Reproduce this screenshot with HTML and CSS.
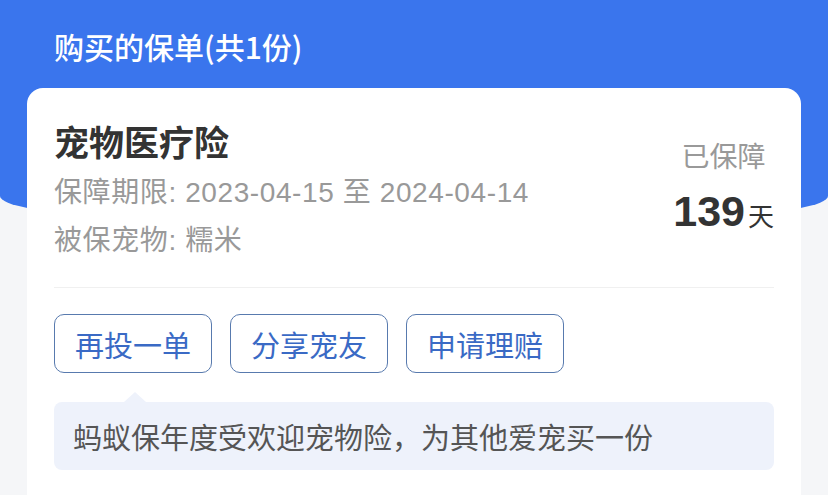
FILE: index.html
```html
<!DOCTYPE html>
<html lang="zh-CN">
<head>
    <meta charset="UTF-8">
    <meta name="viewport" content="width=device-width, initial-scale=1.0">
    <title>购买的保单</title>
    <link rel="stylesheet" href="styles.css">
</head>
<body>
    <div class="page">
        <header class="banner">
            <h1>购买的保单(共1份)</h1>
        </header>

        <section class="card">
            <div class="card-top">
                <div class="info">
                    <h2>宠物医疗险</h2>
                    <p>保障期限: 2023-04-15 至 2024-04-14</p>
                    <p>被保宠物: 糯米</p>
                </div>
                <div class="days">
                    <span class="days-label">已保障</span>
                    <span class="days-count"><b>139</b>天</span>
                </div>
            </div>

            <div class="actions">
                <button>再投一单</button>
                <button>分享宠友</button>
                <button>申请理赔</button>
            </div>

            <div class="tip">蚂蚁保年度受欢迎宠物险，为其他爱宠买一份</div>
        </section>
    </div>
</body>
</html>
```

FILE: styles.css
```css
body {
    margin: 0;
    background-color: #f5f6f8;
    font-family: "Liberation Sans", "Noto Sans CJK SC", sans-serif;
    overflow: hidden;
}
.page {
    width: 828px;
    height: 495px;
    overflow: hidden;
}
.banner {
    height: 230px;
    padding: 22px 54px 0;
    box-sizing: border-box;
    background-color: #3a75ed;
    border-radius: 0 0 50% 50% / 0 0 34px 34px;
}
.banner h1 {
    margin: 0;
    font-family: "Noto Sans CJK SC", sans-serif;
    font-size: 30px;
    line-height: 48px;
    font-weight: 500;
    color: #fff;
}
.card {
    margin: -142px 27px 0;
    padding: 0 27px 40px;
    background-color: #fff;
    border-radius: 16px;
}
.card-top {
    display: flex;
    justify-content: space-between;
    padding-top: 31px;
    padding-bottom: 22px;
    border-bottom: 1px solid #f0f0f0;
}
.info h2 {
    margin: 0 0 6px;
    font-family: "Noto Sans CJK SC", sans-serif;
    font-size: 35px;
    line-height: 44px;
    font-weight: 700;
    color: #333;
}
.info p {
    margin: 0;
    font-size: 28px;
    line-height: 48px;
    letter-spacing: 0.6px;
    color: #999;
}
.days {
    display: flex;
    flex-direction: column;
    align-items: center;
    padding-top: 21px;
}
.days-label {
    font-size: 28px;
    line-height: 36px;
    color: #999;
}
.days-count {
    margin-top: 13px;
    font-size: 26px;
    line-height: 44px;
    color: #333;
}
.days-count b {
    font-size: 43px;
    font-weight: 700;
    margin-right: 3px;
}
.actions {
    display: flex;
    gap: 18px;
    margin-top: 26px;
}
button {
    width: 158px;
    height: 59px;
    padding: 0;
    border: 1.5px solid #587aae;
    border-radius: 10px;
    background-color: #fff;
    font-family: "Noto Sans CJK SC", sans-serif;
    font-size: 29px;
    color: #3a6ac5;
}
.tip {
    position: relative;
    margin-top: 29px;
    height: 68px;
    padding-left: 19px;
    border-radius: 8px;
    background-color: #eef2fb;
    font-family: "Noto Sans CJK SC", sans-serif;
    font-size: 29px;
    line-height: 68px;
    color: #555;
}
.tip::before {
    content: "";
    position: absolute;
    top: -10px;
    left: 70px;
    border-left: 11px solid transparent;
    border-right: 11px solid transparent;
    border-bottom: 10px solid #eef2fb;
}
```
